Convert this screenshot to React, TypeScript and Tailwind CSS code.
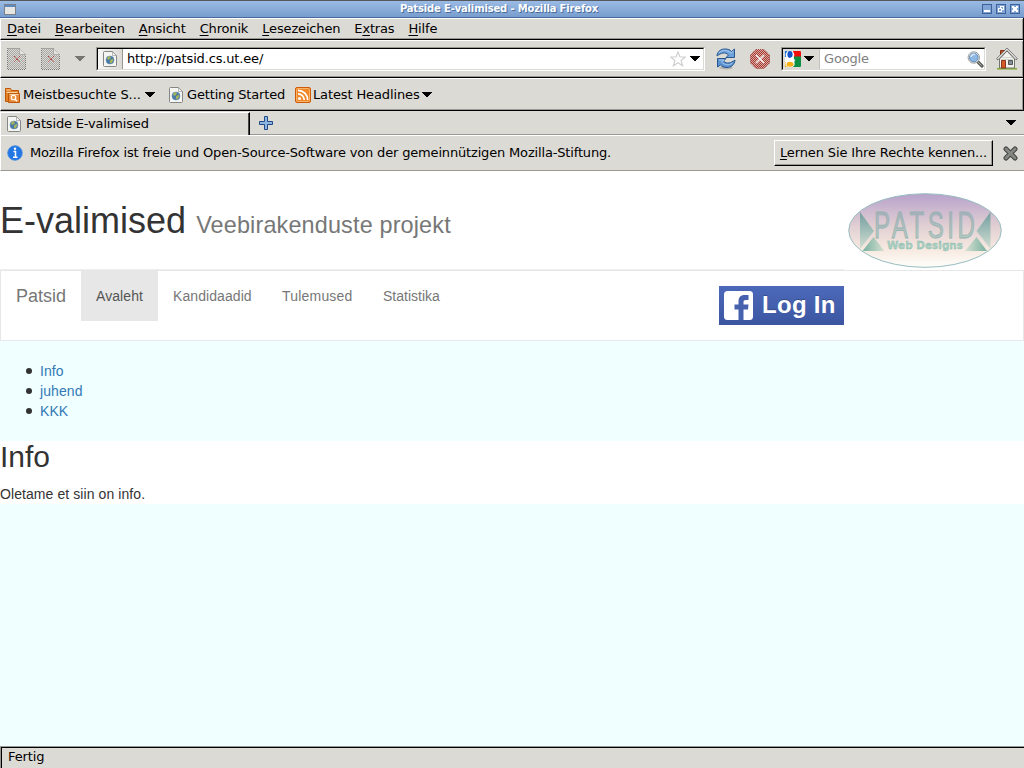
import React from "react";

const Accel = ({ children }: { children: React.ReactNode }) => (
  <span className="underline decoration-1 underline-offset-2">{children}</span>
);

const Arrow = ({ className = "" }: { className?: string }) => (
  <svg className={`shrink-0 ${className}`} width="10" height="6" viewBox="0 0 10 6" shapeRendering="crispEdges">
    <path d="M0 0h10v1H9v1H8v1H7v1H6v1H4V4H3V3H2V2H1V1H0z" fill="currentColor" />
  </svg>
);

const PageIcon = () => (
  <svg className="shrink-0" width="14" height="16" viewBox="0 0 14 16">
    <path d="M1.500.5h8l4 4v10a1 1 0 0 1-1 1h-11a1 1 0 0 1-1-1v-13a1 1 0 0 1 1-1z" fill="#f5f5f3" stroke="#858783" />
    <path d="M9.500.8v3.700h3.700z" fill="#fff" stroke="#9a9c98" strokeWidth=".7" />
    <circle cx="7" cy="9" r="4" fill="#4878a8" stroke="#668cb0" strokeWidth=".6" />
    <path d="M4 7l2-2 2 1-1 2-2 1zM7 9.500l2.500-2 .8 2-2 3-1.500-1z" fill="#a5b55c" />
  </svg>
);

const DisabledPage = ({ id }: { id: string }) => (
  <svg className="shrink-0" width="21" height="24" viewBox="0 0 21 24">
    <defs>
      <pattern id={id} width="2" height="2" patternUnits="userSpaceOnUse">
        <path d="M0 0h1v1H0zM1 1h1v1H1z" fill="#a9a8a4" shapeRendering="crispEdges" />
      </pattern>
    </defs>
    <path d="M1.500 1.500h12l6 6v15h-18z" fill={`url(#${id})`} stroke="#777976" strokeDasharray="1 1" />
    <path d="M13.500 1.500v6h6" fill="#e5e3df" stroke="#888" strokeDasharray="1 1" />
    <path d="M8 9l6 6M14 9l-6 6" stroke="#b54040" strokeWidth="1" strokeDasharray="1.500 .6" />
  </svg>
);

const Reload = () => (
  <svg className="shrink-0" width="20" height="22" viewBox="0 0 20 22">
    <ellipse cx="10" cy="20" rx="7" ry="1.500" fill="#8b8b88" opacity=".5" />
    <path d="M1 8C1.500 3 5 1 9 1c3 0 5 .7 6.500 2.500L18.500 1v8.500H10L12.500 7C9 3.500 5 5 1 8z" fill="#70a2db" stroke="#28568f" strokeWidth="1" />
    <path d="M19 12c-.5 5-4 7.500-8 7.500-3 0-5-.8-6.500-2.500L1.500 19v-8.500H10L7.500 13c3.500 3.500 7.500 2 11.500-1z" fill="#5d92d0" stroke="#28568f" strokeWidth="1" />
    <path d="M3 5C6 1.500 11 1.500 15 5l2.500-2M3 12h5L5.500 14c3 3 7 4 11 1" fill="none" stroke="#a4caf0" strokeWidth="1" />
  </svg>
);

const Stop = () => (
  <svg className="shrink-0" width="20" height="20" viewBox="0 0 20 20">
    <defs>
      <pattern id="stopdots" width="2" height="2" patternUnits="userSpaceOnUse">
        <path d="M0 0h2v2H0z" fill="#dba8a0" />
        <path d="M0 0h1v1H0zM1 1h1v1H1z" fill="#a53b34" shapeRendering="crispEdges" />
      </pattern>
    </defs>
    <path d="M6 .5h8L19.500 6v8L14 19.500H6L.5 14V6z" fill="url(#stopdots)" stroke="#a1433c" strokeDasharray="1 1" />
    <path d="M6 6l8 8M14 6l-8 8" stroke="#f3eeec" strokeWidth="1.700" />
  </svg>
);

const GoogleIcon = () => (
  <svg className="shrink-0" width="16" height="16" viewBox="0 0 16 16">
    <path d="M0 0h16v16H0z" fill="#fff" />
    <path d="M8 0h7a1 1 0 0 1 1 1v5H8z" fill="#f20d0d" />
    <path d="M9 5.500h7V15a1 1 0 0 1-1 1H8z" fill="#0a8f43" />
    <path d="M0 0h3v6H0z" fill="#176edb" />
    <path d="M0 11h3v5H0z" fill="#f5a914" />
    <circle cx="5" cy="3.800" r="4.300" fill="#fff" />
    <ellipse cx="5" cy="3.500" rx="2.600" ry="3.400" fill="#1453c6" />
    <path d="M7 6l3 3-1 3-4-1V7z" fill="#fff" />
    <ellipse cx="5" cy="13" rx="4.700" ry="3.200" fill="#fff" />
    <ellipse cx="5" cy="13.300" rx="3.500" ry="2.500" fill="#f5b014" />
  </svg>
);

const Search = () => (
  <svg className="shrink-0" width="17" height="17" viewBox="0 0 17 17">
    <path d="M10.500 10.500l4.500 4.500" stroke="#61635f" strokeWidth="3.200" strokeLinecap="round" />
    <path d="M11 11l3.500 3.500" stroke="#a5a7a2" strokeWidth="1" />
    <circle cx="6.800" cy="6.500" r="5.700" fill="#f2f2f0" stroke="#999b96" />
    <circle cx="6.800" cy="6.500" r="4.300" fill="#8eb8e4" stroke="#5c88ba" />
    <path d="M4 6c.3-2 2-3 4-2.500" stroke="#dbeafa" strokeWidth="1.500" fill="none" />
  </svg>
);

const Home = () => (
  <svg className="shrink-0" width="22" height="22" viewBox="0 0 22 22">
    <path d="M1 20.800h20" stroke="#82ae2e" strokeWidth="1.500" />
    <path d="M4.500 8.500V2.500h4V7" fill="#c65222" stroke="#843314" />
    <path d="M3.500 11L11 3l7.500 8v9h-15z" fill="#f2f2ef" stroke="#73756f" />
    <path d="M6 9.500h10M5 11.500h12" stroke="#d4d4cf" />
    <path d="M1 11.500L11 1.200l10 10.300" fill="none" stroke="#555753" strokeWidth="2.200" />
    <path d="M1.500 11L11 1.300l9.500 9.700" fill="none" stroke="#eeeeec" strokeWidth="1.100" />
    <path d="M5.500 12.500h4v7.500h-4z" fill="#d45c2b" stroke="#8b3519" />
    <path d="M12.500 12.500h4v4h-4z" fill="#818d99" stroke="#555753" />
  </svg>
);

const FolderSearch = () => (
  <svg className="shrink-0" width="15" height="16" viewBox="0 0 15 16">
    <path d="M.5 14.500v-13h5l1 2h7v11z" fill="#e58125" stroke="#bc5808" />
    <path d="M3.500 15.500v-9h11v9z" fill="#e8893a" stroke="#bc5808" />
    <path d="M1.500 3h4M4.500 7.500h9M1.500 5.500h11" stroke="#fbd5a8" />
    <circle cx="8.500" cy="10.500" r="2.300" fill="#ef9a4a" stroke="#fff" strokeWidth="1.100" />
    <path d="M10 12.200l2 2" stroke="#fff" strokeWidth="1.400" />
  </svg>
);

const Rss = () => (
  <svg className="shrink-0" width="16" height="16" viewBox="0 0 16 16">
    <rect x=".5" y=".5" width="15" height="15" rx="1.500" fill="#f08728" stroke="#cf5b08" />
    <rect x="1.500" y="1.500" width="13" height="13" rx="1" fill="none" stroke="#f9b46b" />
    <circle cx="4.500" cy="11.500" r="1.600" fill="#fff" />
    <path d="M3 6.800A6.200 6.200 0 0 1 9.200 13M3 3.300A9.700 9.700 0 0 1 12.700 13" fill="none" stroke="#fff" strokeWidth="1.700" />
  </svg>
);

const WindowButton = ({ d }: { d: string }) => (
  <svg className="shrink-0" width="10" height="10" viewBox="0 0 10 10" shapeRendering="crispEdges">
    <path d="M0 0h10v10H0z" fill="#3c6299" />
    <path d="M1 1h8v8H1z" fill="#80a4d5" />
    <path d={d} fill="#fff" />
  </svg>
);

const Logo = () => (
  <svg className="shrink-0" width="154" height="76" viewBox="0 0 154 76">
    <defs>
      <linearGradient id="sky" x1="0" y1="0" x2="0" y2="1">
        <stop offset="0" stopColor="#b7a2cb" />
        <stop offset=".45" stopColor="#e2d0d3" />
        <stop offset=".75" stopColor="#f6e9e0" />
        <stop offset="1" stopColor="#fffefa" />
      </linearGradient>
      <linearGradient id="tri" x1="0" y1="0" x2="0" y2="1">
        <stop offset="0" stopColor="#729d9f" />
        <stop offset="1" stopColor="#d3dfd3" />
      </linearGradient>
      <linearGradient id="triL" x1="0" y1="0" x2="1" y2="0">
        <stop offset="0" stopColor="#76b09f" />
        <stop offset="1" stopColor="#d8e0d2" />
      </linearGradient>
      <linearGradient id="triR" x1="1" y1="0" x2="0" y2="0">
        <stop offset="0" stopColor="#76b09f" />
        <stop offset="1" stopColor="#d8e0d2" />
      </linearGradient>
      <linearGradient id="word" x1="0" y1="0" x2="0" y2="1">
        <stop offset=".2" stopColor="#a9afbb" />
        <stop offset=".85" stopColor="#b5cbc0" />
      </linearGradient>
    </defs>
    <ellipse cx="77" cy="37.500" rx="76.300" ry="36.800" fill="url(#sky)" stroke="#97bdc0" strokeWidth="1" />
    <path d="M12 19l14 19-14 18z" fill="url(#tri)" />
    <path d="M142.500 19l-14 19 14 18z" fill="url(#tri)" />
    <path d="M25.500 44l11 14h-22z" fill="url(#triL)" />
    <path d="M128.500 44l10.500 14h-22z" fill="url(#triR)" />
    <g transform="translate(26 45) scale(.66 1)">
      <text x="0" y="0" textLength="153" fontFamily="Liberation Sans, sans-serif" fontSize="36.500" fill="url(#word)" stroke="#93b3b1" strokeWidth=".8">PATSID</text>
    </g>
    <text x="39" y="56" textLength="76" lengthAdjust="spacingAndGlyphs" fontFamily="DejaVu Sans, sans-serif" fontWeight="700" fontSize="10.500" fill="#a9cfc1" stroke="#86b8ac" strokeWidth=".3">Web Designs</text>
  </svg>
);

const Bullet = ({ children }: { children: React.ReactNode }) => (
  <li className="flex items-center">
    <span className="mr-2 size-[6px] rounded-full bg-[#333]" />
    <a>{children}</a>
  </li>
);

const bar = "flex items-center border-t border-t-white border-l border-l-white";

export default function App() {
  return (
    <div className="flex h-[768px] w-[1024px] flex-col overflow-hidden bg-[#f0ffff] font-['DejaVu_Sans',sans-serif] text-[13px] leading-4 tracking-[-0.16px] whitespace-nowrap text-black">
      <header className="flex h-[18px] shrink-0 items-center border-t border-b border-t-[#55585d] border-b-[#486b9f] bg-linear-to-b from-[#9bbbe5] to-[#789dce] pr-1 pl-1">
        <svg className="shrink-0" width="12" height="11" viewBox="0 0 12 11" shapeRendering="crispEdges">
          <path d="M0 0h12v11H0z" fill="#7b8188" />
          <path d="M1 1h10v2H1z" fill="#5e88c1" />
          <path d="M1 3h10v7H1z" fill="#e6e6e2" />
        </svg>
        <div className="flex-1 text-center text-[10px] font-bold text-white [text-shadow:1px_1px_0_#496b9a]">
          Patside E-valimised - Mozilla Firefox
        </div>
        <div className="flex gap-1">
          <WindowButton d="M2 6h6v2H2z" />
          <WindowButton d="M4 2h4v4H6v2H2V4h2zM5 3v1h1v1h1V3zM3 5v2h2V5z" />
          <WindowButton d="M2 2h2v1h2V2h2v2H7v2h1v2H6V7H4v1H2V6h1V4H2z" />
        </div>
      </header>

      <div className="flex shrink-0 flex-col border-r border-r-black bg-[#dcdad5]">
        <nav className={`${bar} h-[22px] gap-[14px] border-b border-b-black pl-[6px] shadow-[inset_-1px_-1px_0_#9a9893]`}>
          <span><Accel>D</Accel>atei</span>
          <span><Accel>B</Accel>earbeiten</span>
          <span><Accel>A</Accel>nsicht</span>
          <span><Accel>C</Accel>hronik</span>
          <span><Accel>L</Accel>esezeichen</span>
          <span>E<Accel>x</Accel>tras</span>
          <span><Accel>H</Accel>ilfe</span>
        </nav>

        <div className={`${bar} h-[38px] border-b border-b-black pl-[5px] shadow-[inset_-1px_-1px_0_#9a9893]`}>
          <DisabledPage id="dotsBack" />
          <div className="w-[13px]" />
          <DisabledPage id="dotsForward" />
          <Arrow className="ml-[14px] text-[#777672]" />
          <div className="ml-[11px] flex h-6 w-[609px] items-stretch border border-t-[#9a9893] border-r-white border-b-white border-l-[#9a9893]">
            <div className="flex flex-1 items-stretch border border-t-black border-r-[#dcdad5] border-b-[#dcdad5] border-l-black bg-white">
              <div className="flex w-[25px] items-center justify-center border-r border-[#9a9893] bg-linear-to-r from-[#f8f8f7] to-[#dcdad5]">
                <PageIcon />
              </div>
              <div className="flex flex-1 items-center pl-1">http://patsid.cs.ut.ee/</div>
              <svg className="mt-[2px] mr-1" width="16" height="16" viewBox="0 0 16 16">
                <path d="M8 1l2 5h5.300l-4.200 3.500 1.500 5.300L8 11.700l-4.600 3.100 1.500-5.300L.7 6H6z" fill="#fff" stroke="#d0d0d0" strokeWidth="1.200" />
              </svg>
              <Arrow className="mt-[7px] mr-[3px]" />
            </div>
          </div>
          <div className="ml-[10px] flex w-[22px] justify-center"><Reload /></div>
          <div className="ml-3 flex w-[22px] justify-center"><Stop /></div>
          <div className="ml-[10px] flex h-6 w-[205px] border border-t-[#9a9893] border-r-white border-b-white border-l-[#9a9893]">
            <div className="flex flex-1 border border-t-black border-r-[#dcdad5] border-b-[#dcdad5] border-l-black bg-white">
              <div className="flex w-[37px] items-center border-r border-[#c5c3be] bg-[#dcdad5] pl-[2px]">
                <GoogleIcon />
                <Arrow className="ml-[3px]" />
              </div>
              <div className="flex flex-1 items-center pl-1 text-[#808080]">Google</div>
              <div className="flex items-center"><Search /></div>
            </div>
          </div>
          <div className="ml-[10px]"><Home /></div>
        </div>

        <div className={`${bar} h-[33px] border-b border-b-black pl-1 shadow-[inset_-1px_-1px_0_#9a9893]`}>
          <FolderSearch />
          <span className="ml-[3px] w-[122px] tracking-[-0.08px]">Meistbesuchte S...</span>
          <Arrow />
          <div className="ml-[14px]"><PageIcon /></div>
          <span className="ml-1 w-[100px]">Getting Started</span>
          <div className="ml-2"><Rss /></div>
          <span className="ml-[2px] w-[109px] tracking-[-0.12px]">Latest Headlines</span>
          <Arrow />
        </div>
      </div>

      <div className="flex h-6 shrink-0 bg-[#dcdad5]">
        <div className="mt-[1px] flex w-[250px] items-center border-t border-r border-l border-t-white border-r-black border-l-white pl-[6px] shadow-[inset_-1px_0_0_#4a4946]">
          <PageIcon />
          <span className="ml-[5px]">Patside E-valimised</span>
        </div>
        <div className="flex flex-1 items-center border-b border-b-[#9a9893] pr-2 pl-[9px]">
          <svg width="14" height="14" viewBox="0 0 14 14">
            <path d="M5.500.5h3v5h5v3h-5v5h-3v-5h-5v-3h5z" fill="#8db5e2" stroke="#204a87" />
          </svg>
          <div className="flex-1" />
          <Arrow />
        </div>
      </div>

      <div className={`${bar} h-9 shrink-0 border-b border-b-[#9a9893] bg-[#dcdad5] pr-[6px] pl-[6px]`}>
        <svg width="16" height="16" viewBox="0 0 16 16">
          <circle cx="8" cy="8" r="7.300" fill="#2377e3" stroke="#448be1" strokeWidth=".8" />
          <path d="M6.500 6.500h2v6M6 12.200h4.500" stroke="#fff" strokeWidth="1.500" fill="none" />
          <circle cx="8" cy="3.700" r="1.200" fill="#fff" />
        </svg>
        <span className="ml-[7px] flex-1 tracking-[-0.165px]">Mozilla Firefox ist freie und Open-Source-Software von der gemeinnützigen Mozilla-Stiftung.</span>
        <button className="mr-[10px] flex h-[26px] w-[219px] items-center justify-center border-t border-r border-b border-l border-t-white border-r-black border-b-black border-l-white tracking-[-0.13px] shadow-[inset_-1px_-1px_0_#9a9893]">
          <span><Accel>L</Accel>ernen Sie Ihre Rechte kennen...</span>
        </button>
        <svg width="15" height="15" viewBox="0 0 15 15">
          <path d="M3 3l9 9M12 3l-9 9" stroke="#464845" strokeWidth="5" strokeLinecap="round" />
          <path d="M3 3l9 9M12 3l-9 9" stroke="#858783" strokeWidth="2.800" strokeLinecap="round" />
        </svg>
      </div>

      <main className="flex flex-1 flex-col font-['Liberation_Sans',sans-serif] text-[14px] leading-5 tracking-[0.08px] text-[#333]">
        <div className="flex h-[99px] shrink-0 bg-white">
          <div className="flex w-[844px] items-start border-b border-[#eee] pt-[30px]">
            <h1 className="text-[36px] leading-10">
              <span className="tracking-[0px]">E-valimised</span>{" "}
              <small className="text-[23.4px] tracking-[0.16px] text-[#777]">Veebirakenduste projekt</small>
            </h1>
          </div>
          <div className="pt-[22px] pl-1"><Logo /></div>
        </div>
        <nav className="flex h-[71px] shrink-0 border border-[#e7e7e7] bg-white text-[#777]">
          <a className="w-20 pt-[15px] pl-[15px] text-[18px] tracking-normal">Patsid</a>
          <a className="h-[50px] w-[77px] bg-[#e7e7e7] pt-[15px] pl-[15px] text-[#555]">Avaleht</a>
          <a className="w-[109px] pt-[15px] pl-[15px]">Kandidaadid</a>
          <a className="w-[101px] pt-[15px] pl-[15px] tracking-[0.2px]">Tulemused</a>
          <a className="w-[86px] pt-[15px] pl-[15px] tracking-normal">Statistika</a>
          <button className="mt-[15px] ml-[265px] flex h-[39px] w-[125px] items-center bg-linear-to-b from-[#4c69ba] to-[#3b55a0] pl-[5px] text-white">
            <svg width="29" height="29" viewBox="0 0 29 29">
              <rect width="29" height="29" rx="3.500" fill="#fff" />
              <path d="M14.500 29V18.500H10.500V13.500h4V10.500C14.500 6 17 4 20.500 4H24.500v5h-2.500c-2 0-2.500.8-2.500 2.300v2.200h5L24 18.500h-4.500V29z" fill="#4661ae" />
            </svg>
            <span className="ml-[9px] pb-[2px] text-[24px] font-bold tracking-[0.3px] [text-shadow:0_-1px_0_#354c8c]">Log In</span>
          </button>
        </nav>
        <ul className="mt-5 mb-[20px] h-[60px] shrink-0 pl-[26px] text-[#337ab7]">
          <Bullet>Info</Bullet>
          <Bullet>juhend</Bullet>
          <Bullet>KKK</Bullet>
        </ul>
        <section className="h-[63px] shrink-0 bg-white">
          <h1 className="mb-3 text-[30px] leading-[31px] tracking-normal">Info</h1>
          <p>Oletame et siin on info.</p>
        </section>
      </main>

      <footer className="flex h-[22px] shrink-0 border-t border-l border-[#9a9893]">
        <div className="flex flex-1 items-center border-t border-l border-black bg-[#dcdad5] pb-[2px] pl-[6px] tracking-[-0.1px]">Fertig</div>
      </footer>
    </div>
  );
}
